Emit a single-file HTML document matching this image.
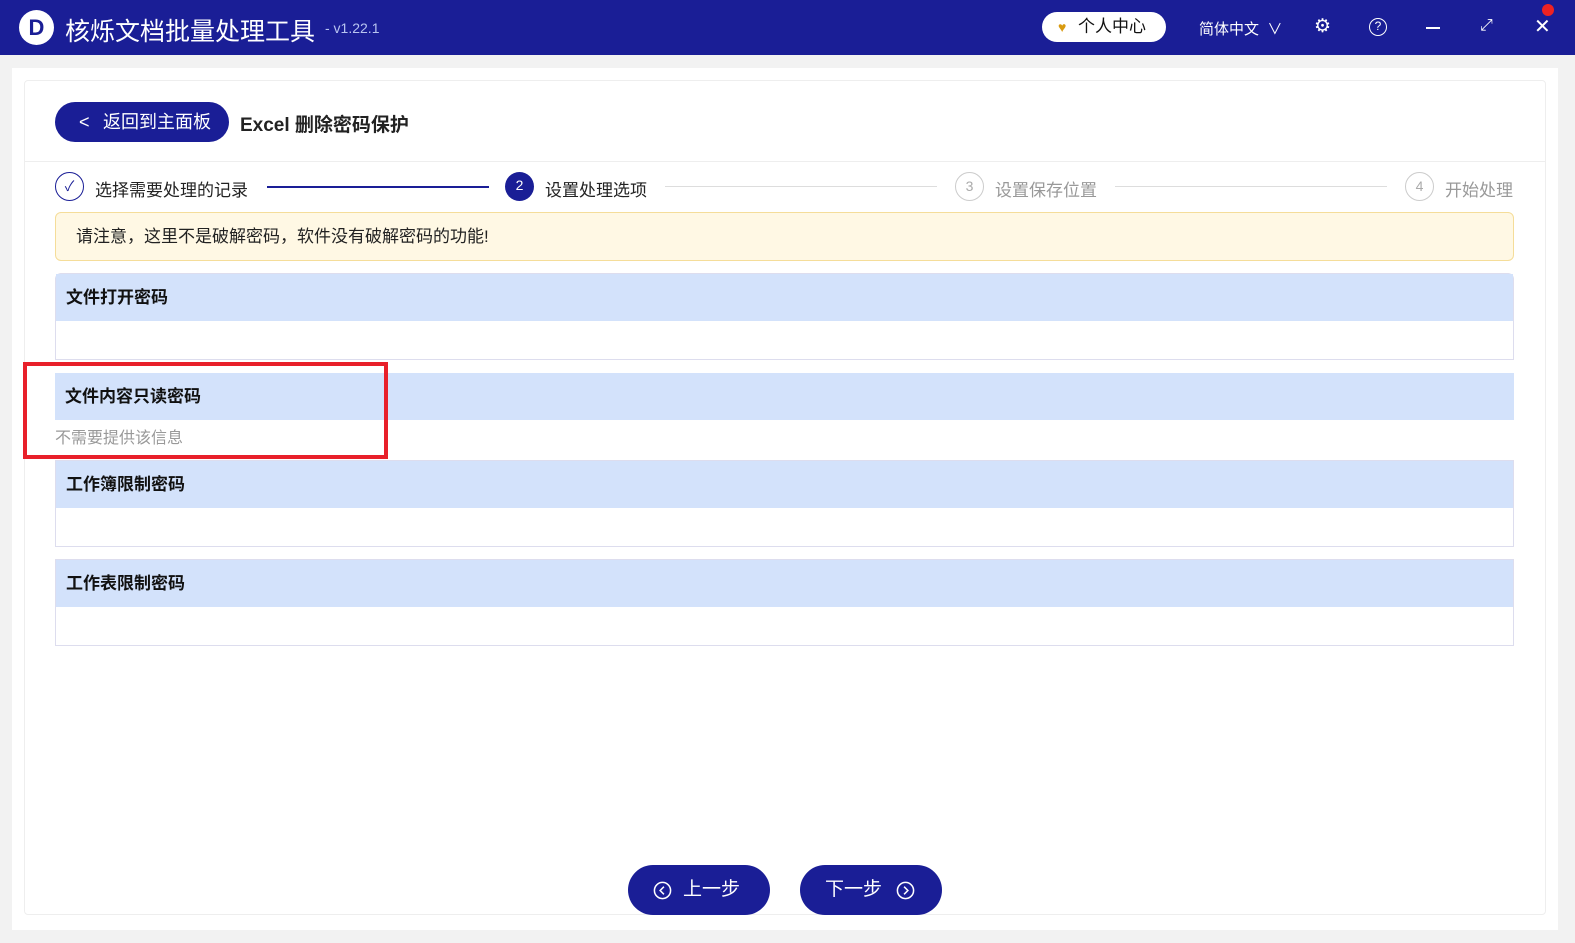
<!DOCTYPE html>
<html><head><meta charset="utf-8"><style>
*{margin:0;padding:0;box-sizing:border-box}
body{width:1575px;height:943px;background:#f2f2f2;font-family:"Liberation Sans","Noto Sans CJK SC",sans-serif;position:relative;overflow:hidden;color:#222}
.top{position:absolute;left:0;top:0;width:1575px;height:55px;background:#1a1e96;color:#fff}
.abs{position:absolute}
.card{position:absolute;left:12px;top:68px;width:1546px;height:862px;background:#fff}
.inner{position:absolute;left:24px;top:80px;width:1522px;height:835px;border:1px solid #eee;border-radius:4px}
.sec{position:absolute;left:55px;width:1459px;border:1px solid #dde;}
.sec .h{background:#d3e2fb;height:47px;line-height:47px;padding-left:10px;font-weight:bold;font-size:17px;color:#111}
.circ{position:absolute;width:29px;height:29px;border-radius:50%;text-align:center;line-height:27px;font-size:14px}
.btn{position:absolute;top:865px;height:50px;width:142px;border-radius:25px;background:#1a1e96;color:#fff;font-size:19px;line-height:50px}
.btn svg{position:absolute;top:16px}
</style></head><body>
<div class="top">
 <div class="abs" style="left:19px;top:10px;width:35px;height:35px;border-radius:50%;background:#fff;color:#1a1e96;font-weight:bold;font-size:22px;text-align:center;line-height:35px">D</div>
 <div class="abs" style="left:65px;top:12px;font-size:25px">核烁文档批量处理工具</div>
 <div class="abs" style="left:325px;top:20px;font-size:14px;color:#b8c4f0">- v1.22.1</div>
 <div class="abs" style="left:1042px;top:12px;width:124px;height:30px;border-radius:15px;background:#fff;color:#111;font-size:17px;line-height:30px;padding-left:36px">个人中心<span class="abs" style="left:16px;top:0;color:#d89a10;font-size:14px">♥</span></div>
 <div class="abs" style="left:1199px;top:18px;font-size:15px">简体中文 &nbsp;∨</div>
 <div class="abs" style="left:1314px;top:15px;font-size:19px">⚙</div>
 <div class="abs" style="left:1369px;top:18px;width:18px;height:18px;border:1.5px solid #fff;border-radius:50%;font-size:12px;text-align:center;line-height:15px">?</div>
 <div class="abs" style="left:1426px;top:27px;width:14px;height:1.5px;background:#fff"></div>
 <div class="abs" style="left:1480px;top:17px;font-size:16px">⤢</div>
 <div class="abs" style="left:1534px;top:14px;font-size:20px">✕</div>
 <div class="abs" style="left:1542px;top:4px;width:12px;height:12px;border-radius:50%;background:#e22"></div>
</div>
<div class="card"></div>
<div class="inner"></div>
<div class="abs" style="left:55px;top:102px;width:174px;height:40px;border-radius:20px;background:#1a1e96;color:#fff;font-size:18px;line-height:40px;padding-left:48px">返回到主面板<span class="abs" style="left:24px;top:0">&lt;</span></div>
<div class="abs" style="left:240px;top:110px;font-size:19px;font-weight:bold">Excel 删除密码保护</div>
<div class="abs" style="left:25px;top:161px;width:1520px;height:1px;background:#eee"></div>
<div class="circ" style="left:55px;top:172px;border:1.5px solid #1a1e96;color:#1a1e96">✓</div>
<div class="abs" style="left:95px;top:176px;font-size:17px">选择需要处理的记录</div>
<div class="abs" style="left:267px;top:186px;width:222px;height:1.5px;background:#1a1e96"></div>
<div class="circ" style="left:505px;top:172px;background:#1a1e96;color:#fff">2</div>
<div class="abs" style="left:545px;top:176px;font-size:17px">设置处理选项</div>
<div class="abs" style="left:665px;top:186px;width:272px;height:1px;background:#ddd"></div>
<div class="circ" style="left:955px;top:172px;border:1.5px solid #ccc;color:#aaa">3</div>
<div class="abs" style="left:995px;top:176px;font-size:17px;color:#999">设置保存位置</div>
<div class="abs" style="left:1115px;top:186px;width:272px;height:1px;background:#ddd"></div>
<div class="circ" style="left:1405px;top:172px;border:1.5px solid #ccc;color:#aaa">4</div>
<div class="abs" style="left:1445px;top:176px;font-size:17px;color:#999">开始处理</div>
<div class="abs" style="left:55px;top:212px;width:1459px;height:49px;background:#fff8e4;border:1px solid #f5dd99;border-radius:6px;font-size:17px;line-height:47px;padding-left:20px">请注意，这里不是破解密码，软件没有破解密码的功能!</div>
<div class="sec" style="top:273px;height:87px;border-radius:6px 6px 0 0"><div class="h">文件打开密码</div></div>
<div class="sec" style="top:373px;height:47px;border:none"><div class="h">文件内容只读密码</div></div>
<div class="abs" style="left:55px;top:424px;font-size:16px;color:#999">不需要提供该信息</div>
<div class="sec" style="top:460px;height:87px"><div class="h">工作簿限制密码</div></div>
<div class="sec" style="top:559px;height:87px"><div class="h">工作表限制密码</div></div>
<div class="abs" style="left:23px;top:362px;width:365px;height:97px;border:4px solid #e8202a"></div>
<div class="btn" style="left:628px"><svg style="left:25px" width="19" height="19" viewBox="0 0 20 20"><circle cx="10" cy="10" r="8.5" fill="none" stroke="#fff" stroke-width="1.6"/><path d="M11.5 6L7.5 10L11.5 14" fill="none" stroke="#fff" stroke-width="1.6"/></svg><span class="abs" style="left:55px">上一步</span></div>
<div class="btn" style="left:800px"><span class="abs" style="left:25px">下一步</span><svg style="left:96px" width="19" height="19" viewBox="0 0 20 20"><circle cx="10" cy="10" r="8.5" fill="none" stroke="#fff" stroke-width="1.6"/><path d="M8.5 6L12.5 10L8.5 14" fill="none" stroke="#fff" stroke-width="1.6"/></svg></div>
</body></html>
